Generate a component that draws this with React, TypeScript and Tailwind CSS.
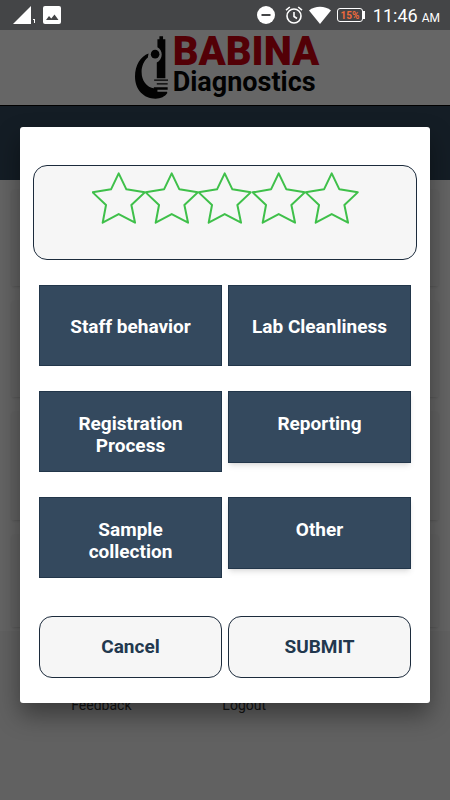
import { clsx } from "clsx";

const options = [
  { label: "Staff behavior", className: "pt-[30px] pb-[27px]" },
  { label: "Lab Cleanliness", className: "pt-[30px] pb-[27px]" },
  { label: "Registration Process", className: "pt-[21px] pb-[14px]" },
  { label: "Reporting", className: "pt-[21px] pb-[27px] shadow-md" },
  { label: "Sample collection", className: "pt-[21px] pb-[14px]" },
  { label: "Other", className: "pt-[21px] pb-[27px] shadow-md" },
];

function StatusBar() {
  return (
    <div className="flex h-[30px] items-center justify-between bg-[#444547] pr-[10px] pl-[13px] text-white">
      <div className="flex items-center gap-[7px]">
        <svg className="h-5 w-[23px]" viewBox="0 0 23 20" fill="currentColor">
          <path d="M0 19 18 1V19Z" />
          <path d="M20 14h2v4h-1v-3h-1z" />
        </svg>
        <svg className="h-[18px] w-[18px]" viewBox="0 0 18 18">
          <rect width="18" height="18" rx="2" fill="currentColor" />
          <path d="M3 14 6 10 8.300 12.500 11.500 8.500 15.500 14Z" fill="#444547" />
        </svg>
      </div>
      <div className="flex items-center">
        <svg className="h-[18px] w-[18px]" viewBox="0 0 18 18">
          <circle cx="9" cy="9" r="9" fill="currentColor" />
          <path d="M4.500 9h9" stroke="#444547" strokeWidth="2" />
        </svg>
        <svg
          className="ml-[10px] h-[18px] w-[18px]"
          viewBox="0 0 18 18"
          fill="none"
          stroke="currentColor"
          strokeWidth="1.600"
        >
          <circle cx="9" cy="10" r="7" />
          <path d="M9 6v4.500l3 2M1 4.200 4.800 1M17 4.200 13.200 1" />
        </svg>
        <svg className="ml-[6px] h-[18px] w-[22px]" viewBox="0 0 22 18" fill="currentColor">
          <path d="M0 4.500C6-.5 16-.5 22 4.500L11 18Z" />
        </svg>
        <div className="ml-[6px] flex items-center">
          <span className="flex h-[14px] w-[26px] items-center justify-center rounded-[3px] border border-white text-[10px] font-bold text-[#ee6a3c]">
            15%
          </span>
          <span className="h-2 w-[2px] bg-white" />
        </div>
        <div className="ml-2 flex items-baseline gap-1">
          <span className="text-[18px]">11:46</span>
          <span className="text-[12px]">AM</span>
        </div>
      </div>
    </div>
  );
}

function Logo() {
  return (
    <div className="flex items-center gap-[5px]">
      <svg className="mt-1 h-[63px] w-[33px]" viewBox="27 17 100 191" fill="#050505">
        <path d="M68 70C44 78 27 106 27 140c0 40 26 67 62 67 16 0 29-6 36-17l-1-4H95v-10h-9c-24-3-39-24-39-50 0-18 7-34 19-44z" />
        <path d="M101 18h11v9h7v118H93V97c9-4 15-13 15-24 0-10-5-18-13-22V27h6z" />
        <circle cx="88" cy="72" r="13" />
        <path d="M85 149h42v4H85zM93 160h33v4H93zM84 172h42v8H84z" />
      </svg>
      <div className="flex flex-col">
        <span className="text-[40px] leading-[34px] font-black text-[#d00010]">BABINA</span>
        <span className="text-[27px] leading-[27px] font-bold text-[#050505]">Diagnostics</span>
      </div>
    </div>
  );
}

function Home() {
  return (
    <div className="flex flex-col bg-[#f2f2f2] [grid-area:1/1]">
      <header className="flex h-[76px] items-center justify-center border-b border-black bg-white pb-1 pl-1">
        <Logo />
      </header>
      <div className="h-[74px] bg-[#34495e]" />
      <div className="flex flex-col gap-[15px] bg-[#fafafa] px-3 pt-[10px] pb-1">
        <div className="h-24 bg-[#f5f5f5] shadow-sm" />
        <div className="h-24 bg-[#f5f5f5] shadow-sm" />
        <div className="h-[108px] bg-[#f5f5f5] shadow-sm" />
        <div className="h-[92px] bg-[#f5f5f5] shadow-sm" />
      </div>
      <nav className="flex pt-16 pl-[30px] text-center text-[14px] leading-5 text-[#333]">
        <a href="#feedback" className="w-[34%]">Feedback</a>
        <a href="#logout" className="w-[34%]">Logout</a>
      </nav>
    </div>
  );
}

function Star() {
  return (
    <svg
      className="w-full"
      viewBox="0 0 160 160"
      fill="none"
      stroke="#3fc04a"
      strokeWidth="6"
      strokeLinejoin="round"
    >
      <path d="M80 4 103 52 158 61 118 99 129 152 80 126 32 152 42 99 2 61 57 52Z" />
    </svg>
  );
}

function FeedbackDialog() {
  return (
    <div
      role="dialog"
      aria-label="Feedback"
      className="w-full rounded-[3px] bg-white px-[13px] pt-[38px] pb-[25px] shadow-[0_12px_24px_rgba(0,0,0,0.400)]"
    >
      <div className="flex justify-center rounded-[14px] border border-[#1c2b3c] bg-[#f6f6f6] pt-[6px] pb-[33px]">
        <div className="grid w-[267px] grid-cols-5">
          {[1, 2, 3, 4, 5].map((n) => (
            <button key={n} type="button" aria-label={`${n} stars`}>
              <Star />
            </button>
          ))}
        </div>
      </div>
      <div className="mt-[25px] grid grid-cols-2 items-start gap-x-[6px] gap-y-[25px] px-[6px]">
        {options.map((o) => (
          <button
            key={o.label}
            type="button"
            className={clsx(
              "border border-[#22364a] bg-[#34495e] px-5 text-[19px] leading-[22px] font-bold text-white",
              o.className
            )}
          >
            {o.label}
          </button>
        ))}
      </div>
      <div className="mt-[38px] grid grid-cols-2 gap-x-[6px] px-[6px] text-[19px] leading-[22px] font-bold text-[#22384e]">
        <button type="button" className="rounded-[13px] border border-[#1c2b3c] bg-[#f6f6f6] py-[19px]">
          Cancel
        </button>
        <button type="button" className="rounded-[13px] border border-[#1c2b3c] bg-[#f6f6f6] py-[19px]">
          SUBMIT
        </button>
      </div>
    </div>
  );
}

export default function App() {
  return (
    <div className="flex min-h-screen flex-col font-['Roboto',sans-serif]">
      <StatusBar />
      <div className="grid flex-1">
        <Home />
        <div className="z-10 flex items-center bg-black/60 px-5 [grid-area:1/1]">
          <FeedbackDialog />
        </div>
      </div>
    </div>
  );
}
